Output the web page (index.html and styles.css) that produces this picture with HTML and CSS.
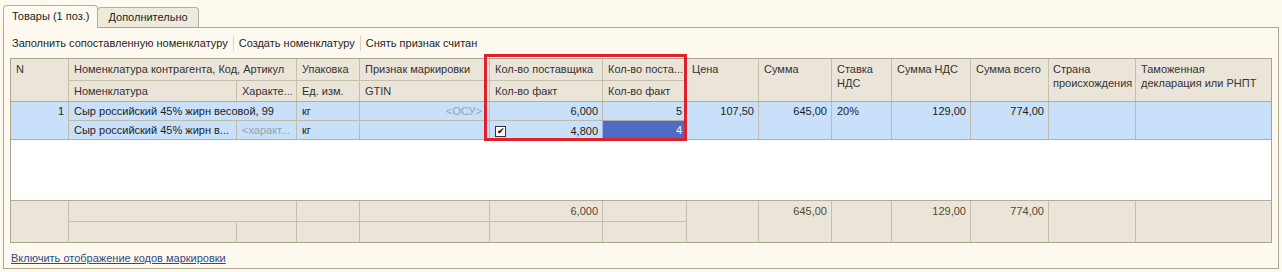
FILE: index.html
```html
<!DOCTYPE html>
<html lang="ru">
<head>
    <meta charset="UTF-8">
    <title>Товары</title>
    <link rel="stylesheet" href="styles.css">
</head>
<body>
    <div class="tabs">
        <div class="tab active">Товары (1 поз.)</div>
        <div class="tab">Дополнительно</div>
    </div>
    <div class="panel">
        <div class="toolbar">
            <span class="cmd">Заполнить сопоставленную номенклатуру</span>
            <span class="cmd">Создать номенклатуру</span>
            <span class="cmd">Снять признак считан</span>
        </div>

        <div class="grid">
            <!-- шапка -->
            <div class="band head">
                <div class="c r2">N</div>
                <div class="c s2">Номенклатура контрагента, Код, Артикул</div>
                <div class="c">Упаковка</div>
                <div class="c">Признак маркировки</div>
                <div class="c">Кол-во поставщика</div>
                <div class="c">Кол-во поста...</div>
                <div class="c r2">Цена</div>
                <div class="c r2">Сумма</div>
                <div class="c r2">Ставка НДС</div>
                <div class="c r2">Сумма НДС</div>
                <div class="c r2">Сумма всего</div>
                <div class="c r2 tight">Страна происхождения</div>
                <div class="c r2">Таможенная декларация или РНПТ</div>
                <div class="c">Номенклатура</div>
                <div class="c">Характе...</div>
                <div class="c">Ед. изм.</div>
                <div class="c">GTIN</div>
                <div class="c">Кол-во факт</div>
                <div class="c">Кол-во факт</div>
            </div>

            <!-- строка -->
            <div class="band row">
                <div class="c r2 num">1</div>
                <div class="c s2">Сыр российский 45% жирн весовой, 99</div>
                <div class="c">кг</div>
                <div class="c num muted edge">&lt;ОСУ&gt;</div>
                <div class="c num">6,000</div>
                <div class="c num">5</div>
                <div class="c r2 num">107,50</div>
                <div class="c r2 num">645,00</div>
                <div class="c r2">20%</div>
                <div class="c r2 num">129,00</div>
                <div class="c r2 num">774,00</div>
                <div class="c r2"></div>
                <div class="c r2"></div>
                <div class="c">Сыр российский 45% жирн в...</div>
                <div class="c muted">&lt;характ...</div>
                <div class="c">кг</div>
                <div class="c"></div>
                <div class="c num with-box"><span class="check">&#10004;</span>4,800</div>
                <div class="c num current">4</div>
            </div>

            <div class="empty"></div>

            <!-- подвал -->
            <div class="band foot">
                <div class="c r2"></div>
                <div class="c s2"></div>
                <div class="c"></div>
                <div class="c"></div>
                <div class="c num">6,000</div>
                <div class="c"></div>
                <div class="c r2"></div>
                <div class="c r2 num">645,00</div>
                <div class="c r2"></div>
                <div class="c r2 num">129,00</div>
                <div class="c r2 num">774,00</div>
                <div class="c r2"></div>
                <div class="c r2"></div>
                <div class="c"></div>
                <div class="c"></div>
                <div class="c"></div>
                <div class="c"></div>
                <div class="c"></div>
                <div class="c"></div>
            </div>

            <div class="mark"></div>
        </div>

        <a class="link" href="#">Включить отображение кодов маркировки</a>
    </div>
</body>
</html>
```

FILE: styles.css
```css
body {
    margin: 0;
    padding: 4px 3px 0;
    background-color: #fdf9ee;
    font-family: "Liberation Sans", Arial, sans-serif;
    font-size: 11px;
    color: #1e1e1e;
}

.tabs {
    display: flex;
    align-items: flex-end;
    height: 23px;
}

.tab {
    height: 19px;
    padding: 0 10px;
    line-height: 19px;
    border: 1px solid #b4b096;
    border-bottom: none;
    border-radius: 4px 4px 0 0;
    background-color: #efebdc;
    margin-right: -1px;
}

.tab.active {
    height: 22px;
    line-height: 21px;
    background-color: #fdf9ee;
    position: relative;
    top: 1px;
    z-index: 1;
    padding: 0 8px;
}

.panel {
    border: 1px solid #aca88f;
    box-sizing: border-box;
    height: 242px;
    padding: 0 6px;
}

.toolbar {
    display: flex;
    height: 30px;
    align-items: center;
    padding-left: 2px;
}

.cmd {
    padding: 0 5px;
    border-left: 1px solid #d8d3c2;
    line-height: 15px;
}

.cmd:first-child {
    border-left: none;
    padding-left: 0;
}

.grid {
    position: relative;
    border: 1px solid #a9a48b;
    width: 1260px;
    background-color: #fff;
}

.band {
    display: grid;
    grid-template-columns: 57px 168px 60px 63px 130px 113px 84px 72px 73px 60px 79px 78px 87px 136px;
}

.head {
    grid-template-rows: 21px 21px;
    background-color: #ebe5d9;
    color: #333;
}

.row {
    grid-template-rows: 18px 19px;
    background-color: #c8e0f9;
    border-top: 1px solid #b3ad98;
    border-bottom: 1px solid #b3ad98;
}

.foot {
    grid-template-rows: 20px 21px;
    background-color: #ebe5d9;
    color: #4f4c34;
    border-top: 1px solid #b3ad98;
}

.foot .num {
    font-family: "Liberation Sans Narrow", "Liberation Sans", Arial, sans-serif;
}

.c {
    border-left: 1px solid #c6bfa9;
    border-top: 1px solid #c6bfa9;
    padding: 3px 4px 0 5px;
    overflow: hidden;
    white-space: nowrap;
    line-height: 14px;
}

.row .c {
    border-color: #c0bba8;
    padding-top: 2px;
}

.head .c:first-child,
.row .c:first-child,
.foot .c:first-child {
    border-left: none;
}

.head .c:nth-child(-n+13),
.row .c:nth-child(-n+13),
.foot .c:nth-child(-n+13) {
    border-top: none;
}

.r2 {
    grid-row: span 2;
    white-space: normal;
}

.s2 {
    grid-column: span 2;
}

.tight {
    padding-left: 4px;
    padding-right: 0;
}

.num {
    text-align: right;
}

.edge {
    padding-right: 7px;
}

.muted {
    color: #9aa0ad;
}

.with-box {
    display: flex;
    justify-content: space-between;
    align-items: center;
    padding-top: 0;
}

.check {
    width: 9px;
    height: 9px;
    border: 1px solid #333;
    background-color: #fff;
    font-size: 9px;
    line-height: 9px;
    text-align: center;
    color: #000;
}

.current {
    background-color: #4e6bc6;
    color: #fff;
    outline: 1px dotted #9aa8d8;
    outline-offset: -1px;
}

.empty {
    height: 60px;
    background-color: #fff;
}

.mark {
    position: absolute;
    left: 473px;
    top: -5px;
    width: 197px;
    height: 81px;
    border: 3px solid #e0202a;
}

.link {
    display: inline-block;
    margin-top: 9px;
    margin-left: 1px;
    color: #2b4b8a;
}
```
